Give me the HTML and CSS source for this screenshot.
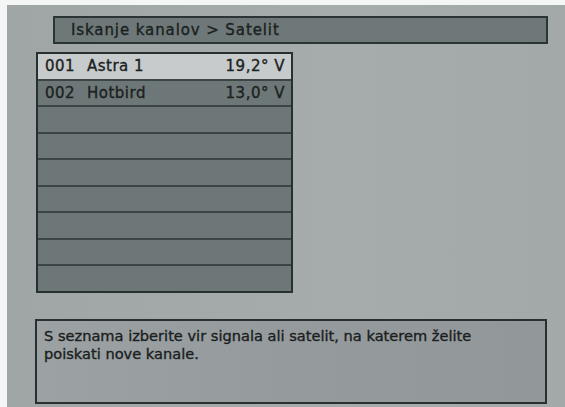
FILE: index.html
```html
<!DOCTYPE html>
<html lang="sl">
<head>
<meta charset="utf-8">
<title>Iskanje kanalov</title>
<link rel="stylesheet" href="styles.css">
</head>
<body>
<div class="screen">
  <div class="title">Iskanje kanalov &gt; Satelit</div>
  <div class="list">
    <div class="row selected"><span class="num">001</span><span class="name">Astra 1</span><span class="pos">19,2° V</span></div>
    <div class="row"><span class="num">002</span><span class="name">Hotbird</span><span class="pos">13,0° V</span></div>
    <div class="row"></div>
    <div class="row"></div>
    <div class="row"></div>
    <div class="row"></div>
    <div class="row"></div>
    <div class="row"></div>
    <div class="row"></div>
  </div>
  <div class="help">S seznama izberite vir signala ali satelit, na katerem želite poiskati nove kanale.</div>
</div>
</body>
</html>
```
FILE: styles.css
```css
html, body {
  margin: 0;
  padding: 0;
  background: #f4f5f5;
}
body {
  width: 565px;
  height: 407px;
  overflow: hidden;
  font-family: "DejaVu Sans", Verdana, sans-serif;
  color: #1b2222;
  -webkit-text-stroke: 0.35px currentColor;
}
.screen {
  margin: 5px 0 0 7px;
  height: 402px;
  box-sizing: border-box;
  background: linear-gradient(90deg, #a0a5a6 0%, #a6abab 60%, #a3a8a8 100%);
  padding: 11px 17px 0 0;
  display: flex;
  flex-direction: column;
}
.title {
  margin-left: 46px;
  height: 28px;
  box-sizing: border-box;
  border: 2px solid #2c3535;
  background: #6f7878;
  padding-left: 16px;
  font-size: 15px;
  line-height: 24px;
  letter-spacing: 0.9px;
  color: #1a2121;
}
.list {
  margin: 8px 0 0 29px;
  width: 257px;
  box-sizing: border-box;
  border: 2px solid #263030;
  background: #6e7777;
  display: flex;
  flex-direction: column;
}
.row {
  height: 24.5px;
  display: flex;
  align-items: center;
  padding: 0 6px 0 7px;
  font-size: 15px;
  letter-spacing: 0.5px;
  background: #6e7777;
}
.row + .row {
  border-top: 2px solid #3b4545;
}
.row.selected {
  background: #c7cbcb;
}
.num {
  width: 42px;
}
.name {
  flex: 1;
}
.pos {
  text-align: right;
}
.help {
  margin: 26px 0 0 28px;
  width: 512px;
  height: 85px;
  box-sizing: border-box;
  border: 2px solid #283131;
  background: linear-gradient(90deg, #9ca1a3 0%, #959b9d 50%, #92989a 100%);
  padding: 6px 50px 0 7px;
  font-size: 14.6px;
  line-height: 18px;
  color: #1a2020;
}
```
